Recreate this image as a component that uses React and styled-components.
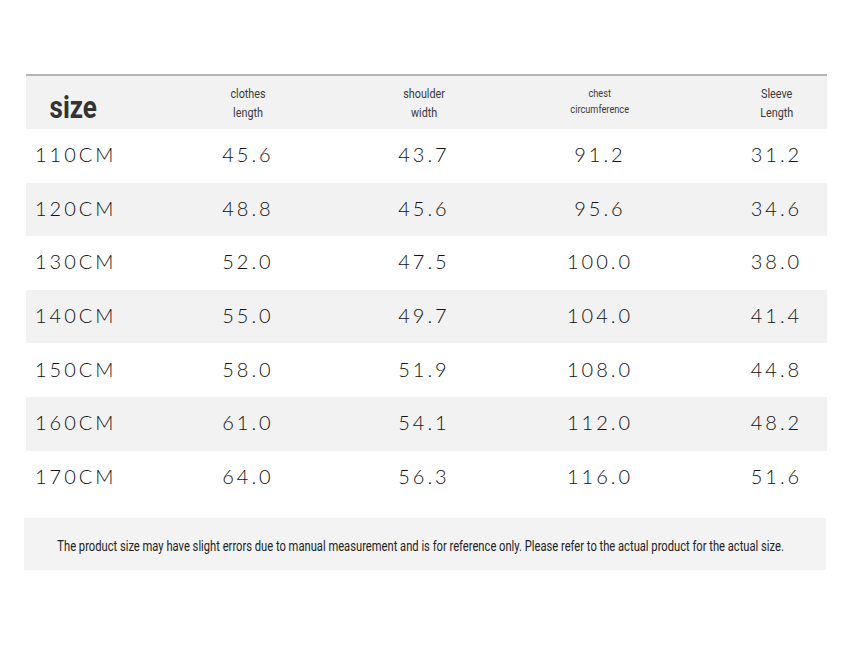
import styled, { createGlobalStyle } from "styled-components";

const GlobalStyle = createGlobalStyle`
  html, body {
    margin: 0;
    padding: 0;
    background: #fff;
  }
`;

const headers = [
  { lines: ["clothes", "length"] },
  { lines: ["shoulder", "width"] },
  { lines: ["chest", "circumference"], small: true },
  { lines: ["Sleeve", "Length"] },
];

const rows = [
  ["110CM", "45.6", "43.7", "91.2", "31.2"],
  ["120CM", "48.8", "45.6", "95.6", "34.6"],
  ["130CM", "52.0", "47.5", "100.0", "38.0"],
  ["140CM", "55.0", "49.7", "104.0", "41.4"],
  ["150CM", "58.0", "51.9", "108.0", "44.8"],
  ["160CM", "61.0", "54.1", "112.0", "48.2"],
  ["170CM", "64.0", "56.3", "116.0", "51.6"],
];

const App = () => {
  return (
    <Page>
      <GlobalStyle />
      <Table>
        <Row $shaded $header>
          <SizeLabel>
            <Narrow $scale={0.84}>size</Narrow>
          </SizeLabel>
          {headers.map((h, i) => (
            <HeadCell key={i} $small={h.small} $last={i === headers.length - 1}>
              <Narrow $scale={0.8}>
                {h.lines[0]}
                <br />
                {h.lines[1]}
              </Narrow>
            </HeadCell>
          ))}
        </Row>
        {rows.map((r, i) => (
          <Row key={r[0]} $shaded={i % 2 === 1}>
            <RowLabel>{r[0]}</RowLabel>
            {r.slice(1).map((v, j) => (
              <Value key={j} $last={j === 3}>
                {v}
              </Value>
            ))}
          </Row>
        ))}
      </Table>
      <Note>
        <Narrow $scale={0.745}>
          The product size may have slight errors due to manual measurement and
          is for reference only. Please refer to the actual product for the
          actual size.
        </Narrow>
      </Note>
    </Page>
  );
};

export default App;

const Page = styled.div`
  width: 861px;
  height: 646px;
  padding-top: 74px;
  box-sizing: border-box;
  overflow: hidden;
`;

const Table = styled.div`
  width: 801px;
  margin-left: 26px;
  border-top: 2px solid #b4b4b4;
`;

const Row = styled.div`
  display: grid;
  grid-template-columns: 134px 176px 176px 176px 1fr;
  align-items: center;
  height: ${(p) => (p.$header ? "53px" : "53.6px")};
  background: ${(p) => (p.$shaded ? "#f2f2f2" : "#fff")};
`;

const Narrow = styled.span`
  display: inline-block;
  white-space: nowrap;
  transform: scaleX(${(p) => p.$scale});
  transform-origin: center;
`;

const SizeLabel = styled.div`
  padding-left: 19px;
  padding-top: 10px;
  font-family: Roboto, "Liberation Sans", sans-serif;
  font-weight: 700;
  font-size: 31px;
  color: #333;
`;

const HeadCell = styled.div`
  text-align: center;
  padding-left: ${(p) => (p.$last ? "38px" : "0")};
  font-family: Roboto, "Liberation Sans", sans-serif;
  font-size: ${(p) => (p.$small ? "11.5px" : "13.5px")};
  line-height: ${(p) => (p.$small ? "16px" : "19px")};
  color: #3a3a3a;
  margin-top: ${(p) => (p.$small ? "-4px" : "0")};
`;

const RowLabel = styled.div`
  padding-left: 9px;
  margin-top: -3px;
  font-family: Lato, "Open Sans", sans-serif;
  font-weight: 300;
  font-size: 20px;
  letter-spacing: 3px;
  color: #111;
`;

const Value = styled.div`
  text-align: center;
  margin-top: -3px;
  padding-left: ${(p) => (p.$last ? "38px" : "0")};
  font-family: Lato, "Open Sans", sans-serif;
  font-weight: 300;
  font-size: 20px;
  letter-spacing: 3px;
  color: #111;
`;

const Note = styled.div`
  display: flex;
  align-items: center;
  justify-content: center;
  width: 802px;
  height: 52px;
  padding: 3px 8px 0 0;
  box-sizing: border-box;
  margin: 14px 0 0 24px;
  background: #f3f3f3;
  font-family: Roboto, "Liberation Sans", sans-serif;
  font-size: 15px;
  color: #222;
`;
